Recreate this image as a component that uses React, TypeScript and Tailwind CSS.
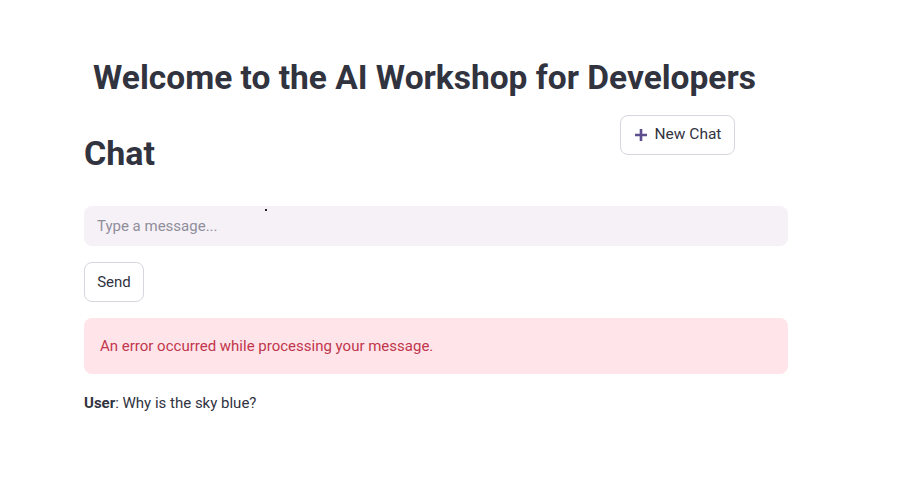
export default function App() {
  return (
    <div className="min-h-[480px] w-[904px] bg-white font-['Roboto',sans-serif] text-[#31333f]">
      <div className="ml-[84px] w-[704px] pt-[56px]">
        <h1 className="ml-[9px] text-[33.5px] font-bold leading-[44px]">
          Welcome to the AI Workshop for Developers
        </h1>

        <div className="mt-[15px] flex items-start">
          <h2 className="mt-[16px] w-[536px] text-[34px] font-bold leading-[44px]">Chat</h2>
          <button className="flex h-[40px] w-[115px] items-center justify-center gap-[7px] rounded-lg border border-[#d6d6de] bg-white text-[15.5px]">
            <svg width="14" height="14" viewBox="0 0 14 14">
              <path d="M7 1v12M1 7h12" stroke="#5d4f8f" strokeWidth="2.6" />
            </svg>
            New Chat
          </button>
        </div>

        <div className="relative mt-[31px] flex h-[40px] items-center rounded-lg bg-[#f6f1f6] px-[13px] text-[15px] text-[#8e8e9c]">
          Type a message...
          <span className="absolute left-[181px] top-[3px] h-[2px] w-[2px] bg-[#222]" />
        </div>

        <button className="mt-[16px] h-[40px] w-[60px] rounded-lg border border-[#d6d6de] bg-white text-[15px]">
          Send
        </button>

        <div className="mt-[16px] flex h-[56px] items-center rounded-lg bg-[#ffe5ea] px-[16px] text-[15px] text-[#c1364a]">
          An error occurred while processing your message.
        </div>

        <p className="mt-[19px] text-[15px] leading-[20px]">
          <span className="font-bold">User</span>: Why is the sky blue?
        </p>
      </div>
    </div>
  );
}
